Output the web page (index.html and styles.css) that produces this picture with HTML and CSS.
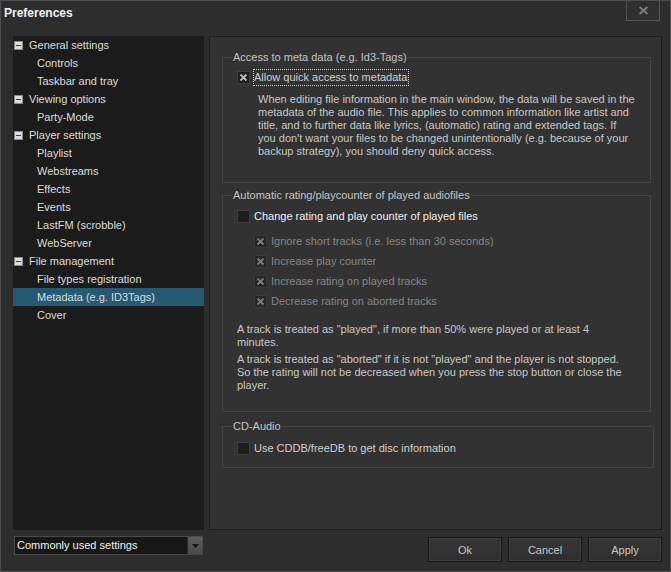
FILE: index.html
```html
<!DOCTYPE html>
<html>
<head>
<meta charset="utf-8">
<link rel="stylesheet" href="styles.css">
</head>
<body>
<div class="window">
  <div class="titlebar">
    <span class="title">Preferences</span>
    <div class="close"><svg width="11" height="9" viewBox="0 0 11 9"><path d="M1.5 1 L9.5 8 M9.5 1 L1.5 8" stroke="#7c7c7c" stroke-width="2"/></svg></div>
  </div>
  <div class="body">
    <ul class="tree">
      <li class="node"><svg class="exp" width="9" height="9" viewBox="0 0 9 9"><rect x="0.5" y="0.5" width="8" height="8" fill="#dedede" stroke="#8a8a8a"/><path d="M2 4.5 H7" stroke="#2d3f7a"/></svg>General settings</li>
      <li class="leaf">Controls</li>
      <li class="leaf">Taskbar and tray</li>
      <li class="node"><svg class="exp" width="9" height="9" viewBox="0 0 9 9"><rect x="0.5" y="0.5" width="8" height="8" fill="#dedede" stroke="#8a8a8a"/><path d="M2 4.5 H7" stroke="#2d3f7a"/></svg>Viewing options</li>
      <li class="leaf">Party-Mode</li>
      <li class="node"><svg class="exp" width="9" height="9" viewBox="0 0 9 9"><rect x="0.5" y="0.5" width="8" height="8" fill="#dedede" stroke="#8a8a8a"/><path d="M2 4.5 H7" stroke="#2d3f7a"/></svg>Player settings</li>
      <li class="leaf">Playlist</li>
      <li class="leaf">Webstreams</li>
      <li class="leaf">Effects</li>
      <li class="leaf">Events</li>
      <li class="leaf">LastFM (scrobble)</li>
      <li class="leaf">WebServer</li>
      <li class="node"><svg class="exp" width="9" height="9" viewBox="0 0 9 9"><rect x="0.5" y="0.5" width="8" height="8" fill="#dedede" stroke="#8a8a8a"/><path d="M2 4.5 H7" stroke="#2d3f7a"/></svg>File management</li>
      <li class="leaf">File types registration</li>
      <li class="leaf selected">Metadata (e.g. ID3Tags)</li>
      <li class="leaf">Cover</li>
    </ul>
    <div class="panel">
      <fieldset class="group g1">
        <legend>Access to meta data (e.g. Id3-Tags)</legend>
        <div class="row">
          <svg class="cb" width="13" height="13" viewBox="0 0 13 13"><rect x="0.5" y="0.5" width="12" height="12" fill="#1d1d1d" stroke="#3e3e3e"/><path d="M3.5 3.5 L9.5 9.5 M9.5 3.5 L3.5 9.5" stroke="#bdbdbd" stroke-width="1.8"/></svg>
          <span class="label focus">Allow quick access to metadata</span>
        </div>
        <p class="text indent">When editing file information in the main window, the data will be saved in the<br>metadata of the audio file. This applies to common information like artist and<br>title, and to further data like lyrics, (automatic) rating and extended tags. If<br>you don't want your files to be changed unintentionally (e.g. because of your<br>backup strategy), you should deny quick access.</p>
      </fieldset>
      <fieldset class="group g2">
        <legend>Automatic rating/playcounter of played audiofiles</legend>
        <div class="row">
          <svg class="cb" width="13" height="13" viewBox="0 0 13 13"><rect x="0.5" y="0.5" width="12" height="12" fill="#1d1d1d" stroke="#3e3e3e"/></svg>
          <span class="label bright">Change rating and play counter of played files</span>
        </div>
        <div class="sublist">
          <div class="subrow"><svg class="cb" width="13" height="13" viewBox="0 0 13 13"><rect x="0.5" y="0.5" width="12" height="12" fill="#262626" stroke="#3a3a3a"/><path d="M3.5 3.5 L9.5 9.5 M9.5 3.5 L3.5 9.5" stroke="#7e7e7e" stroke-width="1.8"/></svg><span class="label dis">Ignore short tracks (i.e. less than 30 seconds)</span></div>
          <div class="subrow"><svg class="cb" width="13" height="13" viewBox="0 0 13 13"><rect x="0.5" y="0.5" width="12" height="12" fill="#262626" stroke="#3a3a3a"/><path d="M3.5 3.5 L9.5 9.5 M9.5 3.5 L3.5 9.5" stroke="#7e7e7e" stroke-width="1.8"/></svg><span class="label dis">Increase play counter</span></div>
          <div class="subrow"><svg class="cb" width="13" height="13" viewBox="0 0 13 13"><rect x="0.5" y="0.5" width="12" height="12" fill="#262626" stroke="#3a3a3a"/><path d="M3.5 3.5 L9.5 9.5 M9.5 3.5 L3.5 9.5" stroke="#7e7e7e" stroke-width="1.8"/></svg><span class="label dis">Increase rating on played tracks</span></div>
          <div class="subrow"><svg class="cb" width="13" height="13" viewBox="0 0 13 13"><rect x="0.5" y="0.5" width="12" height="12" fill="#262626" stroke="#3a3a3a"/><path d="M3.5 3.5 L9.5 9.5 M9.5 3.5 L3.5 9.5" stroke="#7e7e7e" stroke-width="1.8"/></svg><span class="label dis">Decrease rating on aborted tracks</span></div>
        </div>
        <p class="text p2a">A track is treated as "played", if more than 50% were played or at least 4<br>minutes.</p>
        <p class="text p2b">A track is treated as "aborted" if it is not "played" and the player is not stopped.<br>So the rating will not be decreased when you press the stop button or close the<br>player.</p>
      </fieldset>
      <fieldset class="group g3">
        <legend>CD-Audio</legend>
        <div class="row">
          <svg class="cb" width="13" height="13" viewBox="0 0 13 13"><rect x="0.5" y="0.5" width="12" height="12" fill="#1d1d1d" stroke="#3e3e3e"/></svg>
          <span class="label">Use CDDB/freeDB to get disc information</span>
        </div>
      </fieldset>
    </div>
    <div class="combo">
      <span class="combo-text">Commonly used settings</span>
      <span class="combo-btn"><svg width="7" height="4" viewBox="0 0 7 4"><path d="M0 0 H7 L3.5 4 Z" fill="#141414"/></svg></span>
    </div>
    <div class="buttons">
      <button class="btn">Ok</button>
      <button class="btn">Cancel</button>
      <button class="btn">Apply</button>
    </div>
  </div>
</div>
</body>
</html>
```
FILE: styles.css
```css
html, body {
  margin: 0;
  padding: 0;
  background: #2d2d2d;
}
.window {
  box-sizing: border-box;
  width: 671px;
  height: 572px;
  border: 1px solid #4e4e4e;
  background: #2d2d2d;
  font-family: "Liberation Sans", Arial, sans-serif;
  font-size: 11px;
  color: #d8d8d8;
  overflow: hidden;
}
.titlebar {
  height: 35px;
  display: flex;
  align-items: flex-start;
  justify-content: space-between;
}
.title {
  font-weight: bold;
  font-size: 12px;
  color: #f2f2f2;
  margin: 5px 0 0 3px;
  line-height: 14px;
}
.close {
  box-sizing: border-box;
  width: 34px;
  height: 21px;
  margin: -1px 10px 0 0;
  border: 1px solid #555555;
  border-top: none;
  background: #2f2f2f;
  display: flex;
  align-items: center;
  justify-content: center;
}
.body {
  display: grid;
  grid-template-columns: 191px 453px;
  grid-template-rows: 494px auto;
  column-gap: 5px;
  padding-left: 12px;
}
.tree {
  list-style: none;
  margin: 0;
  padding: 0;
  background: #1b1b1b;
}
.tree li {
  height: 18px;
  line-height: 18px;
  white-space: nowrap;
  color: #dcdcdc;
}
.node {
  display: flex;
  align-items: center;
  padding-left: 1px;
}
.exp {
  margin-right: 6px;
}
.leaf {
  padding-left: 24px;
}
.selected {
  background: #255a72;
}
.panel {
  box-sizing: border-box;
  border: 1px solid #1b1b1b;
  background: #323232;
  padding: 13px 10px 0 12px;
}
.group {
  margin: 0;
  border: 1px solid #444444;
  padding: 0 10px 0 14px;
  min-width: 0;
}
.group legend {
  padding: 0 1px;
  margin-left: -5px;
  line-height: 14px;
  color: #c4c4c4;
}
.g1 { padding-top: 6px; padding-bottom: 24px; }
.g2 { margin-top: 5px; padding-top: 7px; padding-bottom: 19px; }
.g3 { margin-top: 7px; margin-right: -3px; padding-top: 8px; padding-bottom: 12px; }
.row {
  display: flex;
  align-items: center;
  height: 14px;
}
.cb {
  flex: none;
  margin-right: 4px;
}
.label {
  line-height: 13px;
  white-space: nowrap;
  color: #cfcfcf;
}
.focus {
  outline: 1px dotted #d0d0d0;
  outline-offset: 0;
  padding: 1px 1px 1px 0;
}
.bright {
  color: #f0f0f0;
}
.dis {
  color: #858585;
}
.sublist {
  margin: 8px 0 0 17px;
}
.subrow {
  display: flex;
  align-items: center;
  height: 20px;
}
.text {
  margin: 0;
  line-height: 13px;
  color: #c8c8c8;
  white-space: nowrap;
}
.indent {
  margin: 9px 0 0 21px;
}
.p2a { margin-top: 12px; }
.p2b { margin-top: 4px; }
.combo {
  box-sizing: border-box;
  margin: 6px 0 0 1px;
  width: 189px;
  height: 19px;
  border: 1px solid #4a4a4a;
  background: #171717;
  display: flex;
  align-items: center;
  justify-content: space-between;
}
.combo-text {
  color: #f0f0f0;
  padding-left: 2px;
  line-height: 17px;
}
.combo-btn {
  box-sizing: border-box;
  width: 15px;
  height: 17px;
  background: linear-gradient(#5c5c5c, #4a4a4a);
  border-left: 1px solid #2a2a2a;
  display: flex;
  align-items: center;
  justify-content: center;
}
.buttons {
  display: flex;
  justify-content: flex-end;
  gap: 6px;
  margin-top: 7px;
}
.btn {
  box-sizing: border-box;
  width: 74px;
  height: 25px;
  border: 1px solid #161616;
  box-shadow: inset 0 0 0 1px #3f3f3f;
  background: linear-gradient(#363636, #2e2e2e);
  color: #c4c8cc;
  font-family: "Liberation Sans", Arial, sans-serif;
  font-size: 11px;
  padding: 0;
}
```
